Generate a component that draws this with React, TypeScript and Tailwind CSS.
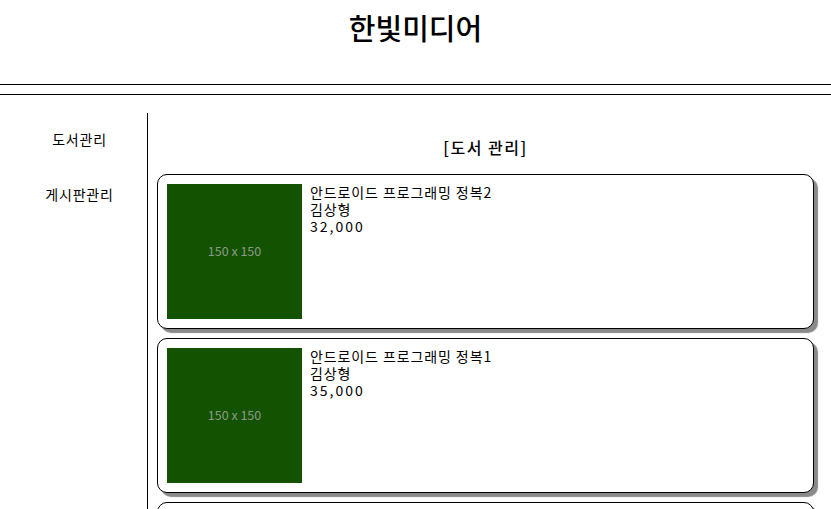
import React from 'react';

const books = [
  { title: '안드로이드 프로그래밍 정복2', author: '김상형', price: '32,000' },
  { title: '안드로이드 프로그래밍 정복1', author: '김상형', price: '35,000' },
  { title: '안드로이드 프로그래밍 정복', author: '김상형', price: '30,000' },
];

function BookCard({ title, author, price }: { title: string; author: string; price: string }) {
  return (
    <div className="mb-[9px] flex rounded-[10px] border border-black bg-white p-[9px] shadow-[4px_4px_1px_#8a8a8a]">
      <div className="flex h-[135px] w-[135px] shrink-0 items-center justify-center bg-[#135200] text-[12.5px] text-[#8e9a88]">
        150 x 150
      </div>
      <div className="ml-2 text-[14px] leading-[17px] text-black">
        <div className="tracking-[0.9px]">{title}</div>
        <div className="tracking-[0.9px]">{author}</div>
        <div className="tracking-[2px]">{price}</div>
      </div>
    </div>
  );
}

export default function App() {
  return (
    <div
      className="h-[509px] overflow-hidden bg-white text-black"
      style={{ fontFamily: '"Noto Sans CJK KR", "Noto Sans", sans-serif' }}
    >
      <header className="flex h-[85px] justify-center border-b border-black pt-[8px]">
        <h1 className="text-[29px] font-medium leading-[38px]">한빛미디어</h1>
      </header>
      <div className="mt-[9px] border-t border-black" />

      <div className="mt-[18px] flex">
        <nav className="h-[420px] w-[148px] shrink-0 border-r border-black pl-[12px] pt-[15px] text-center text-[14px] tracking-[0.8px]">
          <div className="leading-[22px]">도서관리</div>
          <div className="mt-[33px] leading-[22px]">게시판관리</div>
        </nav>

        <main className="flex-1 pl-[9px] pr-[17px]">
          <h2 className="mt-[22px] mb-[15px] text-center text-[16px] font-medium leading-[24px] tracking-[1.5px]">[도서 관리]</h2>
          {books.map((b) => (
            <BookCard key={b.title} {...b} />
          ))}
        </main>
      </div>
    </div>
  );
}
